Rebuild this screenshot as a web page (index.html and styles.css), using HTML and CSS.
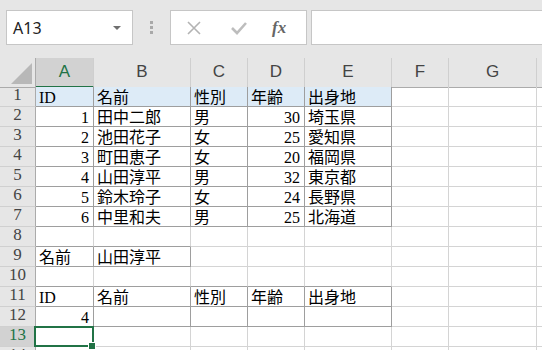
FILE: index.html
```html
<!DOCTYPE html>
<html>
  <head>
    <meta charset="UTF-8">
    <title>Book1 - Excel</title>
    <link rel="stylesheet" href="styles.css">
  </head>
  <body>
    <div class="toolbar">
      <div class="namebox">
        <span class="ref">A13</span>
        <span class="caret"></span>
      </div>
      <div class="grip"><i></i><i></i><i></i></div>
      <div class="fxbuttons">
        <svg class="ico" width="16" height="16" viewBox="0 0 16 16">
          <path d="M2 2 L14 14 M14 2 L2 14" stroke="#b3b3b3" stroke-width="1.6" fill="none"/>
        </svg>
        <svg class="ico" width="18" height="16" viewBox="0 0 18 16">
          <path d="M2 8 L7 13 L16 3" stroke="#bdbdbd" stroke-width="2.6" fill="none"/>
        </svg>
        <span class="fx">fx</span>
      </div>
      <div class="formula"></div>
    </div>

    <div class="sheet">
      <div class="row colhead">
        <div class="corner"><span class="tri"></span></div>
        <div class="ch sel">A</div><div class="ch">B</div><div class="ch">C</div><div class="ch">D</div>
        <div class="ch">E</div><div class="ch">F</div><div class="ch">G</div><div class="ch"></div>
      </div>

      <div class="row">
        <div class="rh">1</div>
        <div class="c t hd">ID</div><div class="c t hd">名前</div><div class="c t hd">性別</div>
        <div class="c t hd">年齢</div><div class="c t hd">出身地</div>
        <div class="c"></div><div class="c"></div><div class="c"></div>
      </div>
      <div class="row">
        <div class="rh">2</div>
        <div class="c t n">1</div><div class="c t">田中二郎</div><div class="c t">男</div>
        <div class="c t n">30</div><div class="c t">埼玉県</div>
        <div class="c"></div><div class="c"></div><div class="c"></div>
      </div>
      <div class="row">
        <div class="rh">3</div>
        <div class="c t n">2</div><div class="c t">池田花子</div><div class="c t">女</div>
        <div class="c t n">25</div><div class="c t">愛知県</div>
        <div class="c"></div><div class="c"></div><div class="c"></div>
      </div>
      <div class="row">
        <div class="rh">4</div>
        <div class="c t n">3</div><div class="c t">町田恵子</div><div class="c t">女</div>
        <div class="c t n">20</div><div class="c t">福岡県</div>
        <div class="c"></div><div class="c"></div><div class="c"></div>
      </div>
      <div class="row">
        <div class="rh">5</div>
        <div class="c t n">4</div><div class="c t">山田淳平</div><div class="c t">男</div>
        <div class="c t n">32</div><div class="c t">東京都</div>
        <div class="c"></div><div class="c"></div><div class="c"></div>
      </div>
      <div class="row">
        <div class="rh">6</div>
        <div class="c t n">5</div><div class="c t">鈴木玲子</div><div class="c t">女</div>
        <div class="c t n">24</div><div class="c t">長野県</div>
        <div class="c"></div><div class="c"></div><div class="c"></div>
      </div>
      <div class="row">
        <div class="rh">7</div>
        <div class="c t n">6</div><div class="c t">中里和夫</div><div class="c t">男</div>
        <div class="c t n">25</div><div class="c t">北海道</div>
        <div class="c"></div><div class="c"></div><div class="c"></div>
      </div>
      <div class="row">
        <div class="rh">8</div>
        <div class="c tb"></div><div class="c tb"></div><div class="c"></div><div class="c"></div>
        <div class="c"></div><div class="c"></div><div class="c"></div><div class="c"></div>
      </div>
      <div class="row">
        <div class="rh">9</div>
        <div class="c t">名前</div><div class="c t">山田淳平</div><div class="c"></div><div class="c"></div>
        <div class="c"></div><div class="c"></div><div class="c"></div><div class="c"></div>
      </div>
      <div class="row">
        <div class="rh">10</div>
        <div class="c tb"></div><div class="c tb"></div><div class="c tb"></div><div class="c tb"></div>
        <div class="c tb"></div><div class="c"></div><div class="c"></div><div class="c"></div>
      </div>
      <div class="row">
        <div class="rh">11</div>
        <div class="c t">ID</div><div class="c t">名前</div><div class="c t">性別</div>
        <div class="c t">年齢</div><div class="c t">出身地</div>
        <div class="c"></div><div class="c"></div><div class="c"></div>
      </div>
      <div class="row">
        <div class="rh">12</div>
        <div class="c t n">4</div><div class="c t"></div><div class="c t"></div>
        <div class="c t"></div><div class="c t"></div>
        <div class="c"></div><div class="c"></div><div class="c"></div>
      </div>
      <div class="row">
        <div class="rh sel">13</div>
        <div class="c active"></div><div class="c"></div><div class="c"></div><div class="c"></div>
        <div class="c"></div><div class="c"></div><div class="c"></div><div class="c"></div>
      </div>
      <div class="row">
        <div class="rh">14</div>
        <div class="c"></div><div class="c"></div><div class="c"></div><div class="c"></div>
        <div class="c"></div><div class="c"></div><div class="c"></div><div class="c"></div>
      </div>
    </div>
  </body>
</html>
```

FILE: styles.css
```css
*
{
  box-sizing: border-box;
}

body
{
  margin: 0;
  width: 542px;
  height: 350px;
  overflow: hidden;
  background: #e6e6e6;
  font-family: "Liberation Serif", "Noto Sans CJK JP", serif;
  font-size: 16px;
  color: #000;
}

/* formula bar */
.toolbar
{
  height: 58px;
  padding-top: 10px;
  display: flex;
  align-items: flex-start;
}

.namebox
{
  margin-left: 6px;
  width: 127px;
  height: 35px;
  background: #fff;
  border: 1px solid #c6c6c6;
  display: flex;
  align-items: center;
  padding-left: 6px;
}

.ref
{
  flex: 1;
  font-family: "Noto Sans", "Liberation Sans", sans-serif;
  font-size: 16px;
  color: #222;
}

.caret
{
  width: 0;
  height: 0;
  margin-right: 11px;
  border-left: 4px solid transparent;
  border-right: 4px solid transparent;
  border-top: 4px solid #6f6f6f;
}

.grip
{
  width: 37px;
  height: 35px;
  display: flex;
  flex-direction: column;
  align-items: center;
  justify-content: center;
  gap: 2px;
}

.grip i
{
  display: block;
  width: 3px;
  height: 3px;
  background: #a9a9a9;
}

.fxbuttons
{
  width: 137px;
  height: 35px;
  background: #fff;
  border: 1px solid #c6c6c6;
  display: flex;
  align-items: center;
  padding-left: 15px;
  gap: 28px;
}

.fx
{
  font-family: "Liberation Serif", serif;
  font-style: italic;
  font-weight: bold;
  font-size: 17px;
  color: #666;
  margin-left: -4px;
}

.formula
{
  flex: 1;
  margin-left: 4px;
  height: 35px;
  background: #fff;
  border: 1px solid #c6c6c6;
  border-right: none;
}

/* sheet grid */
.sheet
{
  background: #fff;
  width: 597px;
}

.row
{
  display: grid;
  grid-template-columns: 36px 58px 97px 57px 57px 87px 57px 88px 60px;
  height: 20px;
}

.colhead
{
  height: 29px;
  background: #e6e6e6;
}

.corner
{
  position: relative;
  border-right: 1px solid #ababab;
  border-bottom: 1px solid #ababab;
}

.tri
{
  position: absolute;
  right: 3px;
  bottom: 3px;
  width: 0;
  height: 0;
  border-left: 21px solid transparent;
  border-bottom: 21px solid #b8b8b8;
}

.ch
{
  border-right: 1px solid #cfcfcf;
  border-bottom: 1px solid #ababab;
  text-align: center;
  line-height: 28px;
  font-family: "Liberation Sans", sans-serif;
  font-size: 17px;
  color: #444;
}

.ch.sel
{
  background: #d2d2d2;
  color: #217346;
  border-bottom: 2px solid #217346;
}

.rh
{
  background: #e6e6e6;
  border-right: 1px solid #ababab;
  border-bottom: 1px solid #d0d0d0;
  text-align: center;
  line-height: 16px;
  font-size: 17px;
  color: #444;
}

.rh.sel
{
  background: #d2d2d2;
  color: #217346;
}

.c
{
  border-right: 1px solid #d4d4d4;
  border-bottom: 1px solid #d4d4d4;
  padding: 0 3px;
  line-height: 21px;
  height: 20px;
  overflow: hidden;
  white-space: nowrap;
}

.c.t
{
  border-right-color: #9e9e9e;
  border-bottom-color: #9e9e9e;
}

.c.tb
{
  border-bottom-color: #9e9e9e;
}

.c.hd
{
  background: #ddebf7;
}

.c.n
{
  text-align: right;
  padding-right: 4px;
}

.c.active
{
  position: relative;
  overflow: visible;
}

.c.active::after
{
  content: "";
  position: absolute;
  left: -2px;
  top: -1px;
  right: -1px;
  bottom: -1px;
  border: 2px solid #217346;
}

.c.active::before
{
  content: "";
  position: absolute;
  right: -3px;
  bottom: -4px;
  width: 6px;
  height: 6px;
  background: #217346;
  border: 1px solid #fff;
  z-index: 1;
}
```
